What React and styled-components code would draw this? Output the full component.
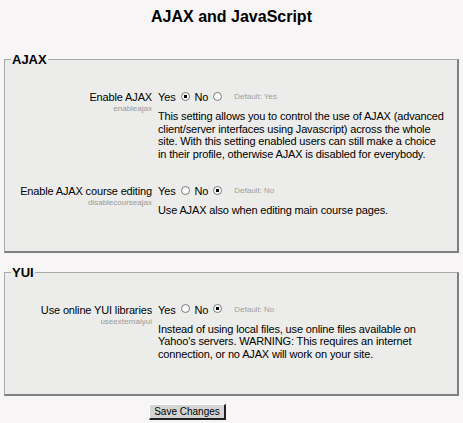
import React from 'react'
import styled, { createGlobalStyle } from 'styled-components'

const GlobalStyle = createGlobalStyle`
  body {
    margin: 0;
    background: #f7f5f5;
    font-family: "Liberation Sans", Arial, sans-serif;
    color: #000;
  }
`

const Page = styled.div`
  padding: 8px 4px 4px 4px;
`

const Heading = styled.h2`
  margin: 0 0 26px 0;
  text-align: center;
  font-size: 16px;
  font-weight: bold;
`

const Fieldset = styled.fieldset`
  margin: 0 0 ${p => p.$after}px 0;
  padding: 23px 6px 34px 6px;
  background: #ecedea;
  border-style: solid;
  border-width: 1px 2px 2px 1px;
  border-color: #a8aaa8 #7d807d #7d807d #a8aaa8;
`

const Legend = styled.legend`
  padding: 0 1px;
  margin-left: 0;
  font-size: 13px;
  font-weight: bold;
`

const Setting = styled.div`
  display: grid;
  grid-template-columns: 141px 1fr;
  column-gap: 6px;
  margin-bottom: ${p => p.$gap || 0}px;
  letter-spacing: -0.15px;
`

const LabelCol = styled.div`
  text-align: right;
`

const Label = styled.div`
  font-size: 11px;
  line-height: 14px;
  white-space: nowrap;
`

const Key = styled.div`
  font-size: 8px;
  color: #999;
  line-height: 10px;
  letter-spacing: 0;
`

const Options = styled.div`
  display: flex;
  align-items: center;
  font-size: 11px;
  line-height: 14px;
`

const Radio = styled.span`
  display: inline-block;
  width: 7px;
  height: 7px;
  border-radius: 50%;
  border: 1px solid #777;
  background: ${p => (p.$on ? 'radial-gradient(circle, #000 0 1.5px, #fff 2px)' : '#fff')};
  margin: 0 5px 0 5px;
  position: relative;
  top: -1px;
`

const Default = styled.span`
  font-size: 8px;
  color: #a0a0a0;
  margin-left: 7px;
  letter-spacing: 0;
`

const Description = styled.div`
  font-size: 11px;
  line-height: 12.5px;
  margin-top: 6px;
  white-space: nowrap;
`

const Actions = styled.div`
  display: flex;
  justify-content: center;
  padding-right: 88px;
`

const Button = styled.button`
  font-family: "Liberation Sans", Arial, sans-serif;
  font-size: 10px;
  padding: 1px 4px;
  height: 16px;
  background: #d4d4d4;
  border-style: solid;
  border-width: 1px 2px 2px 1px;
  border-color: #fff #202020 #202020 #fff;
`

function Choice({ value }) {
  return (
    <Options>
      Yes<Radio $on={value === 'yes'} />
      No<Radio $on={value === 'no'} />
      <Default>Default: {value === 'yes' ? 'Yes' : 'No'}</Default>
    </Options>
  )
}

function Row({ label, name, value, gap, lines }) {
  return (
    <Setting $gap={gap}>
      <LabelCol>
        <Label>{label}</Label>
        <Key>{name}</Key>
      </LabelCol>
      <div>
        <Choice value={value} />
        <Description>
          {lines.map((l, i) => (
            <div key={i}>{l}</div>
          ))}
        </Description>
      </div>
    </Setting>
  )
}

export default function App() {
  return (
    <Page>
      <GlobalStyle />
      <Heading>AJAX and JavaScript</Heading>
      <Fieldset $after={12}>
        <Legend>AJAX</Legend>
        <Row
          label="Enable AJAX"
          name="enableajax"
          value="yes"
          gap={24}
          lines={[
            'This setting allows you to control the use of AJAX (advanced',
            'client/server interfaces using Javascript) across the whole',
            'site. With this setting enabled users can still make a choice',
            'in their profile, otherwise AJAX is disabled for everybody.',
          ]}
        />
        <Row
          label="Enable AJAX course editing"
          name="disablecourseajax"
          value="no"
          lines={['Use AJAX also when editing main course pages.']}
        />
      </Fieldset>
      <Fieldset $after={8}>
        <Legend>YUI</Legend>
        <Row
          label="Use online YUI libraries"
          name="useexternalyui"
          value="no"
          lines={[
            'Instead of using local files, use online files available on',
            "Yahoo's servers. WARNING: This requires an internet",
            'connection, or no AJAX will work on your site.',
          ]}
        />
      </Fieldset>
      <Actions>
        <Button>Save Changes</Button>
      </Actions>
    </Page>
  )
}
